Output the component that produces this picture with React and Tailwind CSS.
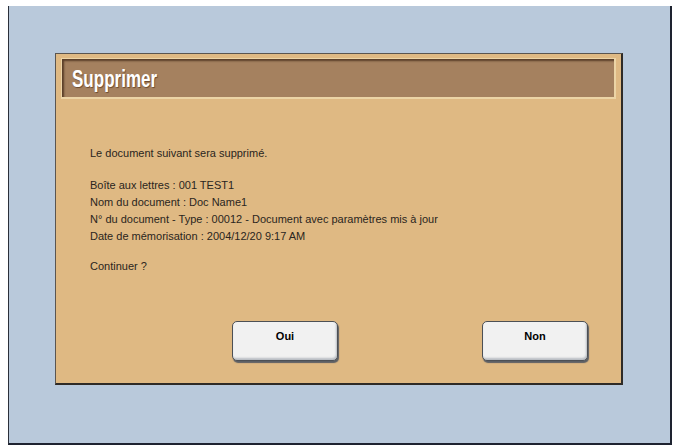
export default function App() {
  const body = "font-['Liberation_Sans',Arial,sans-serif]";
  return (
    <div className="w-[674px] h-[448px] bg-white overflow-hidden">
      <div className="ml-[8px] mt-[6px] w-[664px] h-[439px] bg-[#b9c9db] border-l border-l-[#2a2f3a] border-r-2 border-r-[#1e2330] border-b-2 border-b-[#1e2330] pl-[46px] pt-[47px]">
        <div className="w-[568px] h-[332px] bg-[#dfb983] border border-[#5a5550] border-r-2 border-b-2 border-r-[#2e2a26] border-b-[#2e2a26] flex flex-col">
          <div className="mx-[5px] mt-[4px] h-[41px] bg-[#ecd4a6] p-[1px] pb-[2px] pr-[2px]">
            <div className="h-full bg-[#a5815f] shadow-[inset_2px_2px_2px_#5a3e28] flex items-center pl-[10px] pt-[2px]">
              <span className="inline-block origin-left scale-x-[0.74] font-['Liberation_Sans',Arial,sans-serif] font-bold text-[23px] leading-[26px] text-white [text-shadow:1px_1px_1px_#6b4a30]">
                Supprimer
              </span>
            </div>
          </div>
          <div className={`${body} text-[11px] leading-[17px] text-[#2a2520] pl-[34px] pt-[46px]`}>
            <div>Le document suivant sera supprimé.</div>
            <div className="h-[15px]" />
            <div>Boîte aux lettres : 001 TEST1</div>
            <div>Nom du document : Doc Name1</div>
            <div>N° du document - Type : 00012 - Document avec paramètres mis à jour</div>
            <div>Date de mémorisation : 2004/12/20 9:17 AM</div>
            <div className="h-[13px]" />
            <div>Continuer ?</div>
          </div>
          <div className="flex pl-[176px] gap-[144px] mt-[46px]">
            <button className={`${body} w-[106px] h-[40px] rounded-[5px] bg-[#f1f1f1] border border-[#4d5055] shadow-[1px_2px_1px_#5c5f64,inset_-1px_-2px_2px_#b8bcc2] text-[11px] font-bold text-black pt-[6px] flex justify-center items-start`}>
              Oui
            </button>
            <button className={`${body} w-[106px] h-[40px] rounded-[5px] bg-[#f1f1f1] border border-[#4d5055] shadow-[1px_2px_1px_#5c5f64,inset_-1px_-2px_2px_#b8bcc2] text-[11px] font-bold text-black pt-[6px] flex justify-center items-start`}>
              Non
            </button>
          </div>
        </div>
      </div>
    </div>
  );
}
